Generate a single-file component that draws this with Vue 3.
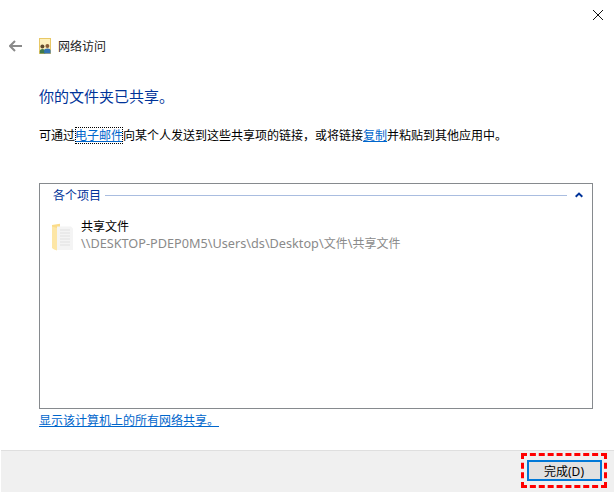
<script setup>
const title = '网络访问'
</script>

<template>
  <div class="window">
    <div class="titlebar">
      <svg class="close" width="10" height="10" viewBox="0 0 10 10"><path d="M0 0L10 10M10 0L0 10" stroke="#111" stroke-width="1" fill="none"/></svg>
    </div>
    <div class="nav">
      <svg class="back" width="13" height="12" viewBox="0 0 13 12"><path d="M6 1L1 6L6 11M1 6H13" stroke="#8a8a8a" stroke-width="2" fill="none"/></svg>
      <svg class="netIcon" width="12" height="16" viewBox="0 0 12 16">
        <rect x="0.5" y="0.5" width="11" height="15" fill="#fdf0bd" stroke="#e8c866"/>
        <circle cx="3.4" cy="8.6" r="2" fill="#5f4a2c"/>
        <path d="M0.8 15.5V13.5Q0.8 11 3.4 11Q6.2 11 6.2 13.5V15.5Z" fill="#3f7a4c"/>
        <circle cx="8.4" cy="8" r="2" fill="#8a5f38"/>
        <path d="M5.2 15.5V12.5Q5.2 10.4 8.4 10.4Q11.6 10.4 11.6 12.5V15.5Z" fill="#3273b5"/>
      </svg>
      <span class="navTitle">{{ title }}</span>
    </div>
    <main class="main">
      <h1 class="heading">你的文件夹已共享。</h1>
      <p class="desc">可通过<a class="focusLink">电子邮件</a>向某个人发送到这些共享项的链接，或将链接<a class="link">复制</a>并粘贴到其他应用中。</p>
      <section class="box">
        <div class="groupHead">
          <span class="groupTitle">各个项目</span>
          <span class="groupLine"></span>
          <svg class="chev" width="8" height="6" viewBox="0 0 8 6"><path d="M0.7 4.8L4 1.6L7.3 4.8" stroke="#003399" stroke-width="2" fill="none"/></svg>
        </div>
        <div class="item">
          <svg class="folder" width="24" height="30" viewBox="0 0 24 30">
            <path d="M1 2L9 0.8V27L5 26.5Q1 25.5 1 24Z" fill="#fbdc8a"/>
            <path d="M6 3.5H20L22 5.5V27H6Z" fill="#f4f4f4"/>
            <path d="M9 7H19M9 10H19M9 13H19M9 16H19M9 19H19M9 22H19" stroke="#e6e6e6" stroke-width="1.5"/>
            <path d="M1 3.5L6 5V27.5Q1 26 1 24Z" fill="#fde6a6"/>
          </svg>
          <div class="itemText">
            <div class="itemName">共享文件</div>
            <div class="itemPath"><span class="latin">\\DESKTOP-PDEP0M5\Users\ds\Desktop\</span>文件<span class="latin">\</span>共享文件</div>
          </div>
        </div>
      </section>
      <a class="allLink">显示该计算机上的所有网络共享。</a>
    </main>
    <footer class="footer">
      <div class="btnWrap">
        <button class="done">完成(D)</button>
      </div>
    </footer>
  </div>
</template>

<style>
html, body { margin: 0; background: #fff; }
</style>

<style scoped>
.window {
  position: relative;
  width: 614px;
  height: 492px;
  display: flex;
  flex-direction: column;
  background: #fff;
  overflow: hidden;
  font-family: "Noto Sans", "Noto Sans CJK SC", "Liberation Sans", sans-serif;
  font-size: 12px;
  color: #000;
}
.titlebar {
  height: 38px;
  flex: none;
  position: relative;
}
.close {
  position: absolute;
  left: 593px;
  top: 10px;
}
.nav {
  height: 16px;
  flex: none;
  display: flex;
  align-items: center;
  padding-left: 9px;
}
.back { margin-right: 17px; }
.netIcon { margin-right: 7px; }
.navTitle { line-height: 16px; padding-top: 2px; color: #222; }
.main {
  flex: 1;
  padding: 0 21px 0 39px;
  display: flex;
  flex-direction: column;
  align-items: flex-start;
}
.heading {
  margin: 32px 0 0;
  height: 20px;
  font-size: 15px;
  line-height: 20px;
  font-weight: 400;
  color: #003399;
}
.desc {
  margin: 21px 0 0;
  height: 18px;
  line-height: 18px;
  white-space: nowrap;
}
.focusLink {
  color: #0066cc;
  text-decoration: underline;
  outline: 1px dotted #000;
  outline-offset: -1px;
}
.link {
  color: #0066cc;
  text-decoration: underline;
}
.box {
  margin-top: 38px;
  box-sizing: border-box;
  width: 554px;
  height: 226px;
  border: 1px solid #868a8e;
}
.groupHead {
  display: flex;
  align-items: center;
  height: 22px;
  padding: 0 9px 0 13px;
}
.groupTitle { color: #003399; line-height: 22px; padding-top: 2px; }
.groupLine {
  flex: 1;
  height: 1px;
  background: #a9bde0;
  margin: 0 8px 0 4px;
}
.item {
  display: flex;
  margin-top: 13px;
  padding-left: 11px;
}
.folder { margin-top: 4px; margin-right: 6px; }
.itemName { line-height: 16px; color: #000; }
.itemPath { line-height: 16px; color: #8a8a8a; white-space: nowrap; }
.latin { font-size: 12.7px; }
.allLink {
  margin-top: 4px;
  line-height: 16px;
  color: #0066cc;
  text-decoration: underline;
}
.footer {
  height: 42px;
  flex: none;
  margin-left: 1px;
  box-sizing: border-box;
  border-top: 1px solid #dfdfdf;
  background: #f0f0f0;
  display: flex;
  justify-content: flex-end;
  align-items: flex-start;
  padding: 2px 7px 0 0;
}
.btnWrap {
  box-sizing: border-box;
  width: 86px;
  height: 35px;
  border: 3px dashed #f00;
  display: flex;
  align-items: center;
  justify-content: center;
}
.done {
  box-sizing: border-box;
  width: 75px;
  height: 21px;
  padding: 2px 0 0;
  border: 2px solid #0078d7;
  background: #e1e1e1;
  font: inherit;
  line-height: 15px;
  color: #000;
}
</style>
